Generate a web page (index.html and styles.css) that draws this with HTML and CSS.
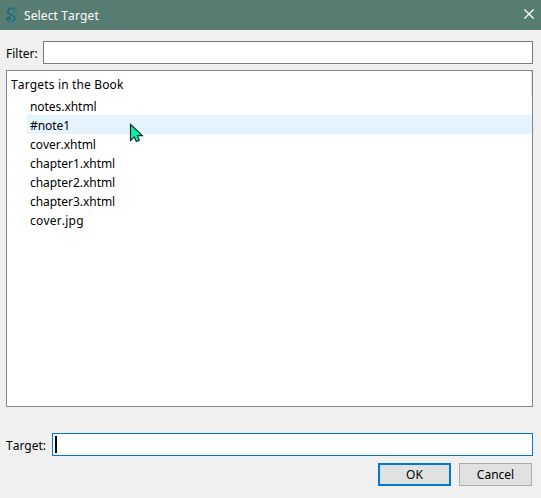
FILE: index.html
```html
<!DOCTYPE html>
<html lang="en">
<head>
<meta charset="utf-8">
<title>Select Target</title>
<link rel="stylesheet" href="styles.css">
</head>
<body>
<div class="dialog">
  <header class="titlebar">
    <svg class="logo" width="12" height="16" viewBox="0 0 12 16" fill="none">
      <path d="M9.5 5V1.8M9 3.8C8 .5 2.2.8 2.2 4.4c0 3.6 7.2 3 7.2 6.6 0 4.4-7.8 4.6-8 .8 0-2 2.6-1.8 2.6.2" stroke="#1f6672" stroke-width="2.2"/>
      <path d="M9.7 5V1.8M8.8 3.4C7.5 1 3.2 1.6 3.4 4.5c.2 2.8 6.8 3 6.8 6.7 0 4-7.5 4.4-8.4 1.2" stroke="#3f929b" stroke-width=".9"/>
    </svg>
    <h1 class="title">Select Target</h1>
    <svg class="close" width="10" height="10" viewBox="0 0 10 10"><path d="M.4.4l9.2 9.2M9.6.4L.4 9.6" stroke="#fff" stroke-width="1.25"/></svg>
  </header>
  <div class="field filter">
    <label class="label filter-label">Filter:</label>
    <div class="input"></div>
  </div>
  <div class="list">
    <div class="list-head">Targets in the Book</div>
    <div class="row">notes.xhtml</div>
    <div class="row hover">#note1
      <svg class="cursor" width="15" height="21" viewBox="0 0 15 21"><path d="M1.5 1.5v16l3.7-3.6 2.1 4.6 3-1.4-2-4.5h5z" fill="#00f5b0" stroke="#182b29" stroke-width="1.2"/></svg>
    </div>
    <div class="row">cover.xhtml</div>
    <div class="row">chapter1.xhtml</div>
    <div class="row">chapter2.xhtml</div>
    <div class="row">chapter3.xhtml</div>
    <div class="row image-file">cover.jpg</div>
  </div>
  <div class="field target">
    <label class="label target-label">Target:</label>
    <div class="input focused"><span class="caret"></span></div>
  </div>
  <div class="buttons">
    <button class="button primary">OK</button>
    <button class="button">Cancel</button>
  </div>
</div>
</body>
</html>
```
FILE: styles.css
```css
* { box-sizing: border-box; }
body {
  margin: 0;
  background: #f0f0f0;
  color: #000;
  font: 12px/19px "Noto Sans", sans-serif;
  font-kerning: none;
}
.dialog {
  width: 541px;
  height: 498px;
  display: flex;
  flex-direction: column;
  overflow: hidden;
}
.titlebar {
  height: 30px;
  flex: none;
  display: flex;
  align-items: center;
  padding: 0 7px 0 6px;
  background: #577d73;
  color: #fff;
}
.title { margin: 0 auto 0 6px; font-size: 12px; font-weight: 400; letter-spacing: 0.12px; }
.close { margin-top: -2px; }
.field { display: flex; align-items: center; height: 23px; flex: none; padding: 0 8px 0 6px; }
.filter { margin-top: 11px; }
.filter-label { width: 37px; }
.target-label { width: 46px; }
.label { flex: none; padding-top: 1px; white-space: nowrap; }
.input { flex: 1; height: 23px; border: 1px solid #7a7a7a; background: #fff; }
.list {
  height: 337px;
  flex: none;
  margin: 6px 8px 0 6px;
  border: 1px solid #828790;
  background: #fff;
}
.list-head {
  height: 25px;
  padding: 4px 0 0 4px;
  border-right: 1px solid #e0e0e0;
  letter-spacing: 0.15px;
}
.row {
  position: relative;
  height: 19px;
  margin-left: 20px;
  padding-left: 3px;
  line-height: 21px;
  letter-spacing: -0.05px;
}
.image-file { letter-spacing: 0.2px; }
.hover { background: #e5f3ff; }
.cursor { position: absolute; left: 102px; top: 8px; z-index: 1; }
.target { margin-top: 26px; }
.input.focused { border-color: #0078d7; padding: 2px; }
.caret { display: block; width: 2px; height: 17px; background: #000; }
.buttons { display: flex; gap: 8px; justify-content: flex-end; margin: 7px 9px 0 0; }
.button {
  width: 73px;
  height: 23px;
  padding: 1px 0 0;
  border: 1px solid #adadad;
  background: #e1e1e1;
  color: #000;
  font: inherit;
  font-kerning: none;
  line-height: 18px;
}
.button.primary { border: 2px solid #0078d7; }
```
